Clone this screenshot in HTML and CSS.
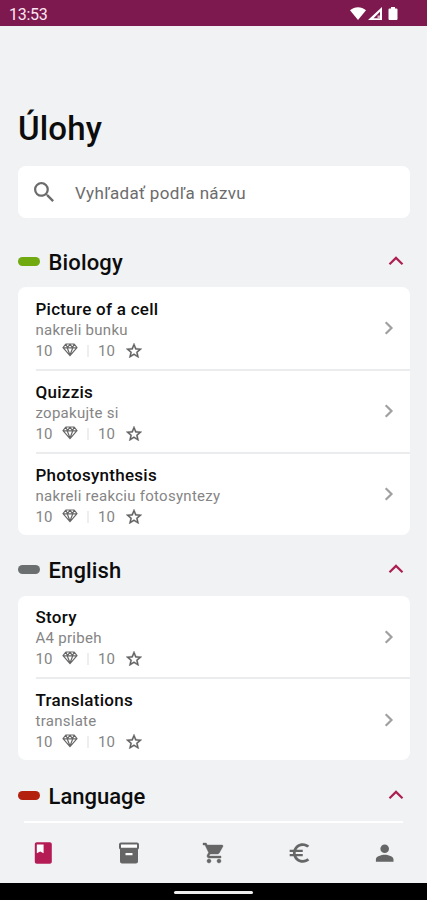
FILE: index.html
```html
<!DOCTYPE html>
<html lang="sk">
<head>
<meta charset="utf-8">
<meta name="viewport" content="width=device-width">
<title>Úlohy</title>
<link rel="stylesheet" href="styles.css">
</head>
<body>
<svg class="defs" width="0" height="0">
  <symbol id="up" viewBox="0 0 16 10"><path d="M1.500 8.200 8 1.900l6.500 6.300" fill="none" stroke="currentColor" stroke-width="2.200"/></symbol>
  <symbol id="next" viewBox="0 0 10 14"><path d="M1.700 1.200 7.500 7l-5.800 5.800" fill="none" stroke="currentColor" stroke-width="2.200"/></symbol>
  <symbol id="gem" viewBox="0 0 16 14"><path d="M3.800 1h8.400L15 4.700 8 12.700 1 4.700zM1 4.800h14M5.200 4.800 8 12l2.800-7.200M3.900 1.300l1.500 3.300L8 1.300l2.600 3.300 1.500-3.300" fill="none" stroke="currentColor" stroke-width="1.200" stroke-linejoin="round"/></symbol>
  <symbol id="star" viewBox="2 2 20 19"><path d="m22 9.240-7.190-.62L12 2 9.190 8.630 2 9.240l5.460 4.730L5.820 21 12 17.270 18.180 21l-1.630-7.030zM12 15.400l-3.760 2.270 1-4.280-3.320-2.880 4.380-.38L12 6.100l1.710 4.040 4.380.38-3.320 2.880 1 4.280z" fill="currentColor" stroke="currentColor" stroke-width=".4"/></symbol>
</svg>
<div class="screen">
  <header class="status">
    <span class="clock">13:53</span>
    <svg class="signals" viewBox="0 0 50 16" fill="#fff"><path d="M0 4.200C4.800.3 11.200.3 16 4.200L8 14z"/><path d="M32 1v13H18zM30 5.800V12.200H23.600z" fill-rule="evenodd"/><path d="M27.500 9.500h2.500v2.700h-2.500z" fill="#d9b4c8"/><path d="M41 1h4v1.400h1.500q1 0 1 1V13q0 1-1 1h-7q-1 0-1-1V3.400q0-1 1-1H41z"/></svg>
  </header>
  <main class="content">
    <h1>Úlohy</h1>
    <div class="search">
      <svg viewBox="3 3 17.500 17.500"><path d="M15.500 14h-.79l-.28-.27A6.471 6.471 0 0 0 16 9.500 6.500 6.500 0 1 0 9.500 16c1.610 0 3.090-.59 4.230-1.570l.27.28v.79l5 4.990L20.490 19zm-6 0C7.010 14 5 11.990 5 9.500S7.010 5 9.500 5 14 7.010 14 9.500 11.990 14 9.500 14z" fill="currentColor"/></svg>
      <span>Vyhľadať podľa názvu</span>
    </div>

    <div class="section"><i class="pill green"></i><h2>Biology</h2><svg class="up"><use href="#up"/></svg></div>
    <div class="card three">
      <div class="row"><div class="info"><h3>Picture of a cell</h3><p>nakreli bunku</p><div class="points"><span>10</span><svg class="gem"><use href="#gem"/></svg><i></i><span>10</span><svg class="star"><use href="#star"/></svg></div></div><svg class="next"><use href="#next"/></svg></div>
      <div class="row"><div class="info"><h3>Quizzis</h3><p>zopakujte si</p><div class="points"><span>10</span><svg class="gem"><use href="#gem"/></svg><i></i><span>10</span><svg class="star"><use href="#star"/></svg></div></div><svg class="next"><use href="#next"/></svg></div>
      <div class="row"><div class="info"><h3>Photosynthesis</h3><p>nakreli reakciu fotosyntezy</p><div class="points"><span>10</span><svg class="gem"><use href="#gem"/></svg><i></i><span>10</span><svg class="star"><use href="#star"/></svg></div></div><svg class="next"><use href="#next"/></svg></div>
    </div>

    <div class="section second"><i class="pill gray"></i><h2>English</h2><svg class="up"><use href="#up"/></svg></div>
    <div class="card two">
      <div class="row"><div class="info"><h3>Story</h3><p>A4 pribeh</p><div class="points"><span>10</span><svg class="gem"><use href="#gem"/></svg><i></i><span>10</span><svg class="star"><use href="#star"/></svg></div></div><svg class="next"><use href="#next"/></svg></div>
      <div class="row"><div class="info"><h3>Translations</h3><p>translate</p><div class="points"><span>10</span><svg class="gem"><use href="#gem"/></svg><i></i><span>10</span><svg class="star"><use href="#star"/></svg></div></div><svg class="next"><use href="#next"/></svg></div>
    </div>

    <div class="section third"><i class="pill red"></i><h2 class="tight">Language</h2><svg class="up"><use href="#up"/></svg></div>
    <div class="peek"></div>
  </main>
  <nav class="tabs">
    <a class="active"><svg viewBox="0 0 24 24"><path fill="#fff" d="M5 3h8v9H5z"/><path d="M17.800 1.200H4.800c-1.100 0-2 .9-2 2v17.600c0 1.100.9 2 2 2h13c1.100 0 2-.9 2-2V3.200c0-1.100-.9-2-2-2zM4.800 3.500h6.800v8.700l-3.400-1.800-3.400 1.800z" fill="currentColor" fill-rule="evenodd"/></svg></a>
    <a><svg viewBox="0 0 24 24"><path fill="#fff" d="M3 3h18v4H3zM8 12h8v2H8z"/><path d="M20 1.500H4c-1 0-2 .9-2 2v3.200c0 .72.430 1.340 1 1.690V20.500c0 1.100 1.100 2 2 2h14c.9 0 2-.9 2-2V8.390c.57-.35 1-.97 1-1.690V3.500c0-1.100-1-2-2-2zm-4.500 12.800h-7v-2.300h7zM20 6.800H4V3.500h16z" fill="currentColor" fill-rule="evenodd"/></svg></a>
    <a><svg viewBox="0 0 24 24"><path d="M7 18c-1.100 0-1.990.9-1.990 2S5.900 22 7 22s2-.9 2-2-.9-2-2-2zM1 2v2h2l3.600 7.590-1.350 2.450c-.16.28-.25.61-.25.96 0 1.100.9 2 2 2h12v-2H7.420c-.14 0-.25-.11-.25-.25l.03-.12.900-1.630h7.450c.75 0 1.410-.41 1.750-1.030l3.580-6.490c.08-.14.12-.31.12-.48 0-.55-.45-1-1-1H5.210l-.94-2zm16 16c-1.100 0-1.990.9-1.990 2s.89 2 1.990 2 2-.9 2-2-.9-2-2-2z" fill="currentColor" stroke="currentColor" stroke-width=".4"/></svg></a>
    <a><svg viewBox="0 0 24 24"><path d="M15 18.500c-2.510 0-4.680-1.420-5.760-3.500H15v-2H8.580c-.05-.33-.08-.66-.08-1s.03-.67.08-1H15V9H9.240C10.320 6.920 12.500 5.500 15 5.500c1.610 0 3.090.59 4.230 1.570L21 5.300C19.410 3.870 17.300 3 15 3c-3.920 0-7.240 2.510-8.480 6H3v2h3.060c-.04.33-.06.66-.06 1s.02.67.06 1H3v2h3.520c1.240 3.490 4.560 6 8.480 6 2.310 0 4.410-.87 6-2.300l-1.780-1.770c-1.130.98-2.600 1.570-4.220 1.570z" transform="translate(-.6 -1.100) scale(1.090)" fill="currentColor"/></svg></a>
    <a><svg viewBox="0 0 24 24"><circle cx="12.700" cy="7.700" r="4.300" fill="currentColor"/><path d="M12.700 13.800c-3.300 0-8.800 1.500-8.800 4.500v2.500h17.600v-2.500c0-3-5.500-4.500-8.800-4.500z" fill="currentColor"/></svg></a>
  </nav>
  <footer class="gesture"><i></i></footer>
</div>
</body>
</html>
```
FILE: styles.css
```css
* { box-sizing: border-box; }
body { margin: 0; background: #f0f2f4; font-family: Roboto, sans-serif; color: #0c0c0c; }
h1, h2, h3, p { margin: 0; white-space: nowrap; }
svg { display: block; flex: none; }
.defs { position: absolute; }
.screen { width: 427px; height: 900px; display: flex; flex-direction: column; overflow: hidden; }
.status { height: 26px; flex: none; background: #7d194f; display: flex; align-items: center; justify-content: space-between; padding: 2px 27px 0 9px; }
.clock { color: #fbe6f1; font-size: 16px; letter-spacing: -.3px; }
.signals { width: 50px; height: 16px; }
.content { height: 797px; flex: none; padding: 0 17px 0 18px; display: flex; flex-direction: column; }
h1 { margin-top: 83px; height: 40px; line-height: 40px; font-size: 33px; font-weight: 500; letter-spacing: .15px; }
.search { height: 52px; margin-top: 17px; padding-left: 16px; border-radius: 8px; background: #fff; display: flex; align-items: center; gap: 21px; color: #6c6c6c; font-size: 17px; letter-spacing: .35px; flex: none; }
.search svg { width: 20px; height: 20px; }
.search span { padding-top: 2px; }
.section { height: 30px; margin-top: 30px; display: flex; align-items: center; flex: none; }
.section.second { margin-top: 21px; }
.section.third { margin-top: 22px; }
.pill { width: 22px; height: 9px; border-radius: 5px; margin-right: 8.500px; margin-bottom: 3px; }
.green { background: #70a910; }
.gray { background: #6c6f70; }
.red { background: #b3200d; }
h2 { font-size: 22px; line-height: 30px; font-weight: 500; letter-spacing: .15px; flex: 1; }
h2.tight { letter-spacing: 0; }
.up { width: 16px; height: 10px; color: #ad1f50; margin-right: 6px; margin-bottom: 4px; }
.card { background: #fff; border-radius: 8px; margin-top: 9px; padding-left: 17.500px; flex: none; }
.second + .card { margin-top: 10px; }
.three { height: 248px; }
.two { height: 164px; }
.row { height: 83px; display: flex; align-items: center; justify-content: space-between; padding-right: 16px; position: relative; }
.row:not(:last-child)::after { content: ""; position: absolute; left: 0; right: 0; bottom: -1px; height: 2px; background: #ebecee; }
.two .row:not(:last-child)::after { bottom: 0; }
.info { align-self: flex-start; padding-top: 11px; }
.second + .card .info { padding-top: 10px; }
h3 { font-size: 17px; line-height: 22px; font-weight: 500; letter-spacing: .27px; }
p { font-size: 15px; line-height: 21px; letter-spacing: .27px; color: #858585; }
.points { height: 20px; display: flex; align-items: center; font-size: 15px; color: #858585; }
.points span { width: 18px; }
.gem { width: 16px; height: 14px; color: #686868; margin: -2px 0 0 8.500px; }
.points i { width: 2px; height: 12px; background: #eee; margin: 0 9px; }
.star { width: 16px; height: 15px; color: #606060; margin: -1px 0 0 10px; }
.next { width: 10px; height: 14px; color: #a0a0a0; margin-bottom: 2px; }
.peek { height: 2px; background: #fff; margin: auto 7px 0 6px; flex: none; }
.tabs { height: 60px; flex: none; display: flex; justify-content: space-around; align-items: center; padding-left: 1px; color: #666; }
.tabs svg { width: 24px; height: 24px; }
.active { color: #b51c55; }
.gesture { height: 17px; flex: none; background: #000; display: flex; align-items: center; justify-content: center; }
.gesture i { width: 79px; height: 3px; border-radius: 2px; background: #eee; margin-top: 2px; }
```
